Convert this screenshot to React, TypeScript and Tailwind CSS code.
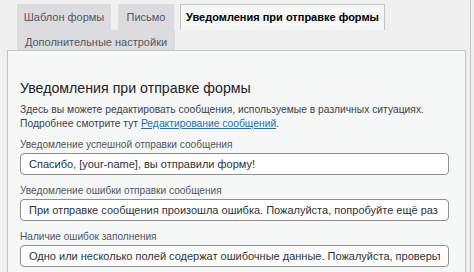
import React from "react";

const font = { fontFamily: '"Liberation Sans", Arial, sans-serif' };

function Field({ label, value }: { label: string; value: string }) {
  return (
    <div className="flex flex-col mb-[9px]">
      <div className="h-[14px] leading-[14px] text-[10.1px] text-[#50575e] mb-[1px]">{label}</div>
      <input
        readOnly
        value={value}
        style={font}
        className="h-[22px] w-[429px] bg-white border border-[#8c8f94] rounded-[4px] px-[8px] text-[11px] text-[#2c3338] outline-none"
      />
    </div>
  );
}

export default function App() {
  return (
    <div className="w-[474px] h-[272px] bg-[#f0f0f1] overflow-hidden" style={font}>
      <div className="w-[471px] h-[272px] border-r border-[#c3c4c7]">
        <div className="pl-[17px] pt-[4px] flex">
          <div className="w-[94px] h-[26px] mr-[7px] flex items-center justify-center border border-b-0 border-[#dcdcde] bg-[#dcdcde] text-[11px] text-[#50575e]">
            Шаблон формы
          </div>
          <div className="w-[56px] h-[26px] mr-[6px] flex items-center justify-center border border-b-0 border-[#dcdcde] bg-[#dcdcde] text-[11px] text-[#50575e]">
            Письмо
          </div>
          <div className="w-[205px] h-[26px] flex items-center justify-center border border-b-0 border-[#c3c4c7] bg-[#f6f7f7] text-[11px] font-bold text-black">
            Уведомления при отправке формы
          </div>
        </div>
        <div className="pl-[17px] flex">
          <div className="w-[158px] h-[20px] pt-[4px] leading-[14px] text-center border border-b-0 border-[#dcdcde] bg-[#dcdcde] text-[11px] text-[#50575e]">
            Дополнительные настройки
          </div>
        </div>
        <div className="ml-[7px] w-[459px] h-[240px] border border-b-0 border-[#c3c4c7] bg-[#f6f7f7] pl-[12px] pt-[26px]">
          <h2 className="text-[14.2px] leading-[22px] text-[#1d2327] mb-[4px]">Уведомления при отправке формы</h2>
          <p className="text-[10.3px] leading-[14px] text-[#3c434a] mb-[7px]">
            Здесь вы можете редактировать сообщения, используемые в различных ситуациях.
            <br />
            Подробнее смотрите тут{" "}
            <span className="text-[#2271b1] underline">Редактирование сообщений</span>.
          </p>
          <Field label="Уведомление успешной отправки сообщения" value="Спасибо, [your-name], вы отправили форму!" />
          <Field
            label="Уведомление ошибки отправки сообщения"
            value="При отправке сообщения произошла ошибка. Пожалуйста, попробуйте ещё раз позже."
          />
          <Field
            label="Наличие ошибок заполнения"
            value="Одно или несколько полей содержат ошибочные данные. Пожалуйста, проверьте их и попробуйте ещё раз."
          />
        </div>
      </div>
    </div>
  );
}
